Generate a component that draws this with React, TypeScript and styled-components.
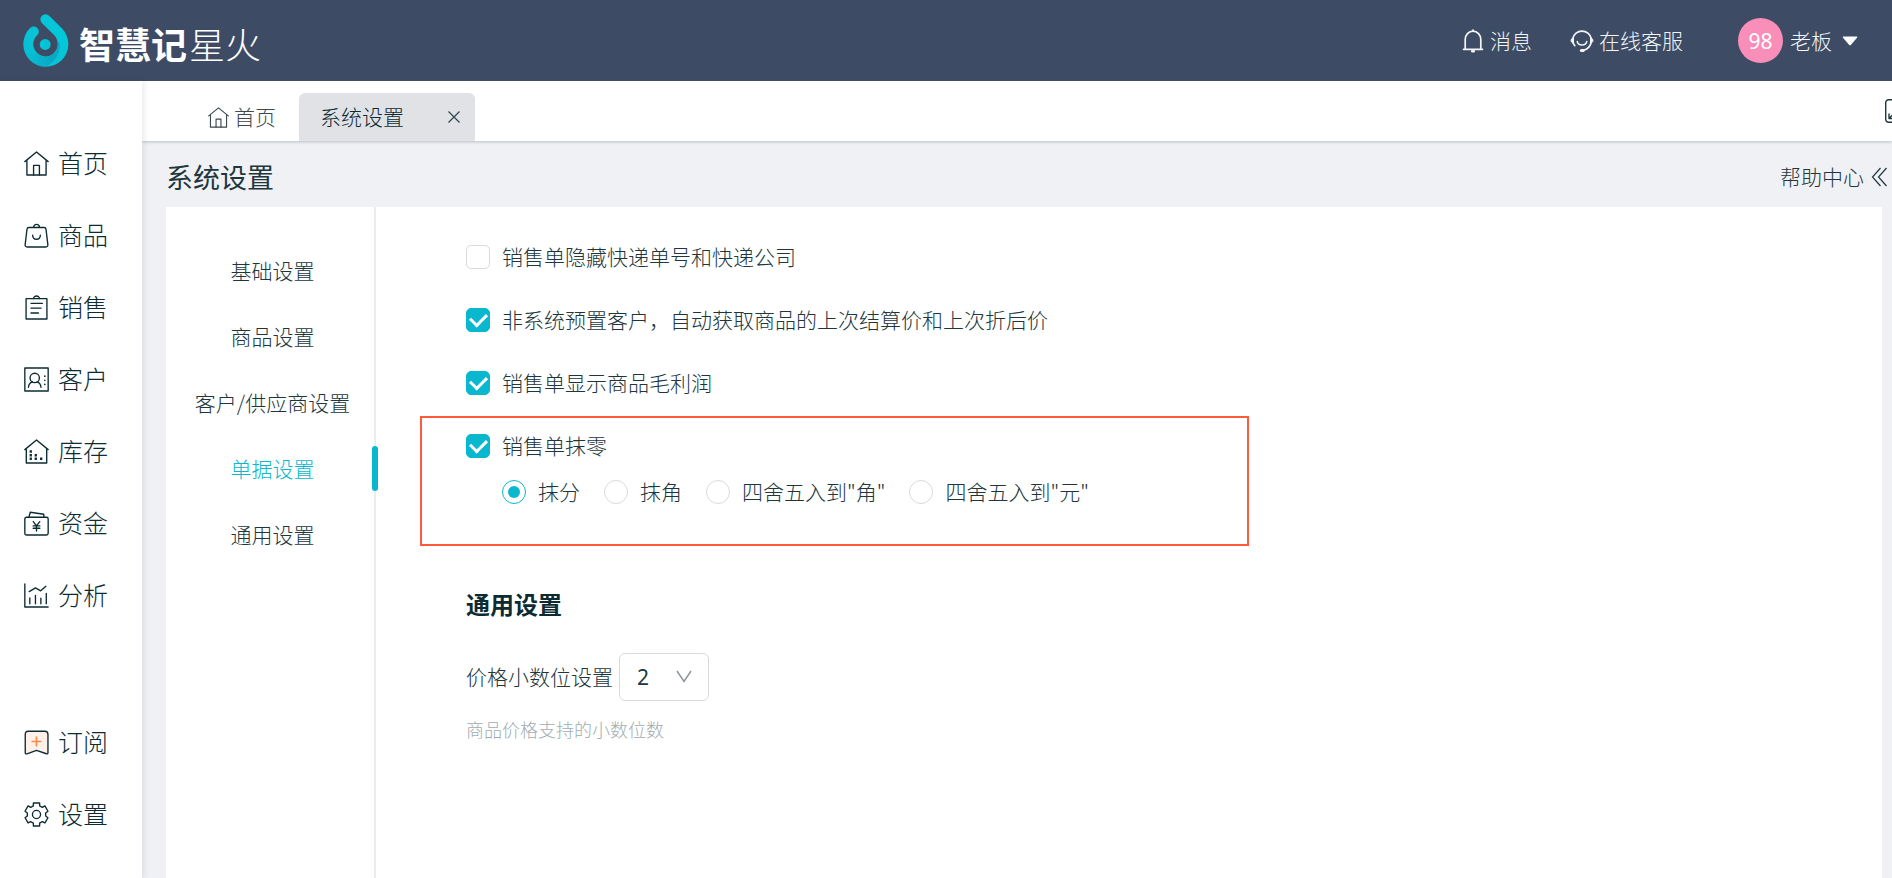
import React, { useState } from "react";
import styled, { createGlobalStyle } from "styled-components";

const ink = "#0c2b33";
const body = "#20363d";
const teal = "#09b8cf";

const GlobalStyle = createGlobalStyle`
  * { box-sizing: border-box; }
  body {
    margin: 0;
    background: #f0f1f5;
    color: ${body};
    font-family: "Noto Sans CJK SC", "Noto Sans", sans-serif;
    font-size: 21px;
    font-weight: 300;
    line-height: 32px;
  }
  button, select, input { font: inherit; color: inherit; margin: 0; }
  a { color: inherit; text-decoration: none; }
  h1, h2, p { margin: 0; }
`;

const Shell = styled.div`
  display: flex;
  flex-direction: column;
  min-height: 100vh;
`;

const Header = styled.header`
  display: flex;
  align-items: center;
  justify-content: space-between;
  height: 81px;
  padding: 0 31px 0 22px;
  background: #3d4c64;
  color: #f3f5f8;
`;

const Brand = styled.a`
  display: flex;
  align-items: center;
  gap: 10px;
  color: #fff;
  font-size: 36px;
  line-height: 48px;
`;

const BrandName = styled.span`
  font-weight: 300;
  padding-top: 4px;
  b { font-weight: 700; margin-right: 2px; }
`;

const HeaderTools = styled.div`
  display: flex;
  align-items: center;
`;

const ToolButton = styled.button<{ $space: number; $gap: number }>`
  display: flex;
  align-items: center;
  gap: ${(p) => p.$gap}px;
  margin-right: ${(p) => p.$space}px;
  padding: 0;
  border: 0;
  background: none;
`;

const Text = styled.span`
  padding-bottom: 2px;
`;

const Avatar = styled.span`
  display: grid;
  place-items: center;
  width: 45px;
  height: 45px;
  border-radius: 50%;
  background: #f98eb9;
  color: #fff;
  font-family: "Noto Sans", sans-serif;
  font-weight: 400;
`;

const Columns = styled.div`
  display: flex;
  flex: 1;
`;

const Sidebar = styled.nav`
  display: flex;
  flex-direction: column;
  flex: none;
  gap: 75px;
  width: 142px;
  padding-top: 46px;
  background: #fff;
  box-shadow: 2px 0 6px rgba(30, 50, 80, 0.1);
  z-index: 1;
`;

const NavGroup = styled.div`
  display: flex;
  flex-direction: column;
`;

const NavLink = styled.a`
  display: flex;
  align-items: center;
  gap: 9px;
  height: 72px;
  padding-left: 24px;
  color: ${ink};
  font-size: 25px;
`;

const Main = styled.main`
  display: flex;
  flex-direction: column;
  flex: 1;
  min-width: 0;
`;

const TabBar = styled.div`
  display: flex;
  align-items: flex-end;
  height: 60px;
  padding-left: 47px;
  background: #fff;
  box-shadow: 0 1px 3px rgba(60, 80, 90, 0.3);
  clip-path: inset(0 0 -6px 0);
  overflow: hidden;
`;

const Tab = styled.div<{ $active?: boolean }>`
  display: flex;
  align-items: center;
  justify-content: space-between;
  gap: 5px;
  height: 48px;
  width: ${(p) => (p.$active ? "176px" : "110px")};
  padding: ${(p) => (p.$active ? "0 14px 0 21px" : "0 23px 0 19px")};
  border-radius: 6px 6px 0 0;
  background: ${(p) => (p.$active ? "#e1e2e6" : "transparent")};
  color: ${(p) => (p.$active ? ink : "#3c494d")};
  white-space: nowrap;
`;

const IconButton = styled.button`
  display: flex;
  padding: 0;
  border: 0;
  background: none;
`;

const ExpandButton = styled(IconButton)`
  flex: none;
  align-self: center;
  margin-left: auto;
  margin-right: -17px;
`;

const PageHead = styled.div`
  display: flex;
  align-items: center;
  justify-content: space-between;
  height: 66px;
  padding: 6px 4px 0 24px;
`;

const PageTitle = styled.h1`
  font-size: 27px;
  font-weight: 400;
  line-height: 40px;
`;

const HelpLink = styled.a`
  display: flex;
  align-items: center;
  gap: 7px;
`;

const Panel = styled.section`
  display: flex;
  flex: 1;
  margin: 0 10px 0 24px;
  background: #fff;
`;

const SubMenu = styled.nav`
  display: flex;
  flex-direction: column;
  flex: none;
  width: 210px;
  padding-top: 31px;
  border-right: 2px solid #ebecef;
`;

const SubLink = styled.a<{ $active?: boolean }>`
  position: relative;
  display: flex;
  align-items: center;
  justify-content: center;
  height: 66px;
  padding-left: 5px;
  color: ${(p) => (p.$active ? teal : body)};
  &::after {
    content: "";
    display: ${(p) => (p.$active ? "block" : "none")};
    position: absolute;
    right: -4px;
    top: 10px;
    width: 6px;
    height: 45px;
    border-radius: 3px;
    background: ${teal};
  }
`;

const Content = styled.div`
  flex: 1;
  min-width: 0;
  padding: 18px 44px;
`;

const OptionRow = styled.div`
  display: flex;
  align-items: center;
  height: 63px;
  padding-left: 46px;
`;

const Choice = styled.label`
  display: flex;
  align-items: center;
  gap: 12px;
`;

const CheckInput = styled.input`
  appearance: none;
  display: grid;
  place-items: center;
  width: 24px;
  height: 24px;
  border: 1px solid #d9dade;
  border-radius: 5px;
  background: #fff;
  &:checked { background: ${teal}; border-color: ${teal}; }
  &:checked::after {
    content: "";
    width: 8px;
    height: 13px;
    margin-bottom: 3px;
    border: solid #fff;
    border-width: 0 3px 3px 0;
    transform: rotate(45deg);
  }
`;

const RadioInput = styled.input`
  appearance: none;
  display: grid;
  place-items: center;
  width: 24px;
  height: 24px;
  border: 1px solid #d9dade;
  border-radius: 50%;
  background: #fff;
  &:checked { border-color: ${teal}; }
  &:checked::after {
    content: "";
    width: 12px;
    height: 12px;
    border-radius: 50%;
    background: ${teal};
  }
`;

const Highlight = styled.div`
  max-width: 829px;
  height: 130px;
  margin-top: 2px;
  border: 2px solid #ff5a3c;
`;

const HighlightHead = styled(OptionRow)`
  height: 55px;
  padding-left: 44px;
`;

const RadioRow = styled.div`
  display: flex;
  gap: 24px;
  align-items: center;
  height: 38px;
  padding-left: 80px;
`;

const Section = styled.section`
  padding: 40px 0 0 46px;
`;

const SectionTitle = styled.h2`
  color: ${ink};
  font-size: 24px;
  font-weight: 700;
  line-height: 36px;
`;

const FieldRow = styled.div`
  display: flex;
  align-items: center;
  gap: 6px;
  margin-top: 31px;
`;

const FieldLabel = styled.label`
  padding-bottom: 2px;
`;

const SelectBox = styled.span`
  position: relative;
  display: flex;
  width: 90px;
  svg {
    position: absolute;
    right: 17px;
    top: 17px;
    pointer-events: none;
  }
`;

const Select = styled.select`
  appearance: none;
  width: 100%;
  height: 48px;
  padding: 0 17px;
  border: 1px solid #d9dade;
  border-radius: 6px;
  background: #fff;
  font-family: "Noto Sans", sans-serif;
  font-weight: 400;
`;

const Hint = styled.p`
  margin-top: 14px;
  color: #9fadb1;
  font-size: 18px;
  line-height: 28px;
`;

const Icon = ({ children, size = 25, sw = 1.3 }: { children: React.ReactNode; size?: number; sw?: number }) => (
  <svg width={size} height={size} viewBox="0 0 24 24" fill="none" stroke="currentColor" strokeWidth={sw} strokeLinecap="round" strokeLinejoin="round" aria-hidden="true">
    {children}
  </svg>
);

const home = (
  <>
    <path d="M.8 10.2 12 1l11.2 9.2M2.8 9v14h18.4V9" />
    <path d="M9.2 23v-9.2h5.6V23" />
  </>
);

const icons: Record<string, React.ReactNode> = {
  首页: home,
  商品: (
    <>
      <path d="M4.6 4.3h14.8q1.5 0 1.7 1.5l1.8 15q.2 2.2-2 2.2H3.1q-2.2 0-2-2.2l1.8-15q.2-1.5 1.7-1.5Z" />
      <path d="M9.2 4.2C9.2.4 14.8.4 14.8 4.2M8.3 11.7c.2 5.2 7.2 5.2 7.4 0" />
    </>
  ),
  销售: (
    <>
      <path d="M2 3.5h20V23H2Z" />
      <path d="M9.2 3.4c0-3.2 5.6-3.2 5.6 0M6.7 8h11M6.7 12.6h9.6M6.7 17.3h7.2" />
    </>
  ),
  客户: (
    <>
      <path d="M.8 1h22.4v22H.8Z" />
      <circle cx="10.3" cy="10.5" r="4.5" />
      <path d="M4.3 19.4c.2-2.5 1.6-4.5 3.7-5.2M16.3 19.4c-.2-2.5-1.6-4.5-3.7-5.2" />
      <path strokeWidth="1.6" d="M20 8.7v.1M20 12.7v.1M20 16.7v.1" />
    </>
  ),
  库存: (
    <>
      <path d="M.8 10.2 12 1l11.2 9.2M2.2 9.2V23h19.6V9.2" />
      <path strokeWidth="2.4" strokeLinecap="butt" d="M5.4 12h2.2M5.4 15.5h2.2M5.4 19h2.2M10.2 15.5h2.2M10.2 19h2.2M15.4 19h2.2" />
    </>
  ),
  资金: (
    <>
      <rect x=".8" y="6" width="22.4" height="17" rx="1.6" />
      <path d="M4.8 5.7 6 1.2l13 1.9v2.6M8.9 10.2l3.1 4 3.1-4M12 14.2v5M8.8 14.3h6.4M8.8 16.6h6.4" />
    </>
  ),
  分析: (
    <>
      <path d="M.8 1v22h22.4M5 8.2 11 4.7l5 2.8 5-4.3" />
      <path d="M5.6 20v-5.6M11 20v-8M16.2 20v-5.4M21.4 20V10" />
    </>
  ),
  订阅: (
    <>
      <path fill="#fff1e9" d="M4 1.2h16q3 0 3 3v17.6q0 1.4-1.5 1L12 19.6 2.8 22.9Q1.2 23.2 1.2 22V4.2q0-3 2.8-3Z" />
      <path stroke="#f58a4b" strokeWidth="1.6" d="M12 6.8v8.4M7.8 11h8.4" />
    </>
  ),
  设置: (
    <>
      <path d="M9 1h6v2.8l2.6 1.4 2.5-1.4 2.9 5.1-2.2 1.6v3l2.2 1.6-2.9 5-2.5-1.3-2.6 1.4V23H9v-2.8l-2.6-1.4-2.5 1.3-2.9-5 2.2-1.6v-3L1 8.9l2.9-5.1 2.5 1.4L9 3.8Z" />
      <circle cx="12" cy="12" r="3.9" />
    </>
  ),
};

const Logo = () => (
  <svg width="47" height="55" viewBox="66 40 140 166" aria-hidden="true">
    <defs>
      <linearGradient id="drop" x1="0.1" y1="0.9" x2="0.9" y2="0.3">
        <stop offset="0" stopColor="#08bfd3" />
        <stop offset="0.5" stopColor="#07c4d6" />
        <stop offset="1" stopColor="#02c8da" />
      </linearGradient>
      <linearGradient id="shade" x1="0" y1="0" x2="1" y2="0">
        <stop offset="0" stopColor="#0aa6c6" stopOpacity="0" />
        <stop offset="0.8" stopColor="#0aa6c6" />
        <stop offset="1" stopColor="#0aa6c6" />
      </linearGradient>
    </defs>
    <path fill="url(#drop)" d="M125 70A15 15 0 0 1 147 48L186 87A68 68 0 1 1 88 87A15 15 0 0 1 113 105A37 37 0 1 0 173 135Q173 118 161 106Z" />
    <path fill="url(#shade)" d="M75 163A68 68 0 0 0 132 203Q183 180 179 128L173 130A37 37 0 0 1 112 163Z" />
    <circle cx="135" cy="135" r="16.5" fill="#04c3d6" />
  </svg>
);

const navMain = ["首页", "商品", "销售", "客户", "库存", "资金", "分析"];
const navFoot = ["订阅", "设置"];
const subItems = ["基础设置", "商品设置", "客户/供应商设置", "单据设置", "通用设置"];
const options = [
  { label: "销售单隐藏快递单号和快递公司", on: false },
  { label: "非系统预置客户，自动获取商品的上次结算价和上次折后价", on: true },
  { label: "销售单显示商品毛利润", on: true },
];
const rounding = ["抹分", "抹角", '四舍五入到"角"', '四舍五入到"元"'];

const NavItem = ({ name }: { name: string }) => (
  <NavLink href="#">
    <Icon>{icons[name]}</Icon>
    <Text>{name}</Text>
  </NavLink>
);

export default function App() {
  const [mode, setMode] = useState(rounding[0]);
  return (
    <Shell>
      <GlobalStyle />
      <Header>
        <Brand href="#">
          <Logo />
          <BrandName>
            <b>智慧记</b>星火
          </BrandName>
        </Brand>
        <HeaderTools>
          <ToolButton $gap={5} $space={38}>
            <Icon size={24} sw={1.7}>
              <path d="M4.2 20V10.500a7.800 8.300 0 0 1 15.600 0V20M2.500 20.300h19M12 2.200V1" />
              <path strokeWidth="2.6" d="M11.3 22.200h1.400" />
            </Icon>
            <Text>消息</Text>
          </ToolButton>
          <ToolButton $gap={5} $space={55}>
            <Icon size={24} sw={1.7}>
              <path d="M2.8 9.500a9.400 9.400 0 0 1 18.400 0M21.200 13.500c-1 3.800-3.700 6.800-7.700 7.800" />
              <path fill="currentColor" strokeWidth="1" d="M3.500 8.800v5.400C.2 13.500.2 9.500 3.500 8.800ZM20.500 8.800v5.400c3.300-.7 3.300-4.700 0-5.400Z" />
              <path d="M3.200 14c.4 1 .9 1.900 1.600 2.700" />
              <path strokeWidth="3" d="M11.400 21.500h1.800" />
              <path strokeWidth="1.4" d="M7.200 12.500c1 4.600 8.600 4.600 9.600 0" />
            </Icon>
            <Text>在线客服</Text>
          </ToolButton>
          <ToolButton $gap={7} $space={0}>
            <Avatar>98</Avatar>
            <Text>老板</Text>
            <svg width="22" height="10" viewBox="0 0 22 10" aria-hidden="true">
              <path d="M4.500.5h13q1.500 0 .5 1.200L12 8.800q-1 1-2 0L4 1.700Q3 .5 4.500.5Z" fill="#fff" />
            </svg>
          </ToolButton>
        </HeaderTools>
      </Header>
      <Columns>
        <Sidebar>
          <NavGroup>{navMain.map((n) => <NavItem key={n} name={n} />)}</NavGroup>
          <NavGroup>{navFoot.map((n) => <NavItem key={n} name={n} />)}</NavGroup>
        </Sidebar>
        <Main>
          <TabBar>
            <Tab>
              <Icon size={21}>{home}</Icon>
              <Text as="a" href="#">首页</Text>
            </Tab>
            <Tab $active>
              <Text>系统设置</Text>
              <IconButton aria-label="关闭">
                <svg width="14" height="14" viewBox="0 0 14 14" stroke="#2f444b" strokeWidth="1.2" aria-hidden="true">
                  <path d="M1.500 1.500l11 11M12.500 1.500l-11 11" />
                </svg>
              </IconButton>
            </Tab>
            <ExpandButton aria-label="展开">
              <Icon size={24} sw={1.4}>
                <rect x=".7" y=".7" width="22.6" height="22.6" rx="3" />
                <path d="M4 15v4.500h4.500M4.500 19l5-5" />
              </Icon>
            </ExpandButton>
          </TabBar>
          <PageHead>
            <PageTitle>系统设置</PageTitle>
            <HelpLink href="#">
              <Text>帮助中心</Text>
              <svg width="17" height="20" viewBox="0 0 17 20" fill="none" stroke="currentColor" strokeWidth="1.2" aria-hidden="true">
                <path d="M9.500 1 1.500 10l8 9M15.500 1l-8 9 8 9" />
              </svg>
            </HelpLink>
          </PageHead>
          <Panel>
            <SubMenu>
              {subItems.map((s) => (
                <SubLink key={s} href="#" $active={s === "单据设置"}>
                  <Text>{s}</Text>
                </SubLink>
              ))}
            </SubMenu>
            <Content>
              {options.map((o) => (
                <OptionRow key={o.label}>
                  <Choice>
                    <CheckInput type="checkbox" defaultChecked={o.on} />
                    <Text>{o.label}</Text>
                  </Choice>
                </OptionRow>
              ))}
              <Highlight>
                <HighlightHead>
                  <Choice>
                    <CheckInput type="checkbox" defaultChecked />
                    <Text>销售单抹零</Text>
                  </Choice>
                </HighlightHead>
                <RadioRow>
                  {rounding.map((r) => (
                    <Choice key={r}>
                      <RadioInput type="radio" name="rounding" checked={mode === r} onChange={() => setMode(r)} />
                      <Text>{r}</Text>
                    </Choice>
                  ))}
                </RadioRow>
              </Highlight>
              <Section>
                <SectionTitle>通用设置</SectionTitle>
                <FieldRow>
                  <FieldLabel htmlFor="decimals">价格小数位设置</FieldLabel>
                  <SelectBox>
                    <Select id="decimals" defaultValue="2">
                      {[0, 1, 2, 3, 4].map((n) => <option key={n}>{n}</option>)}
                    </Select>
                    <svg width="16" height="13" viewBox="0 0 16 13" fill="none" stroke="#8a9699" strokeWidth="1.5" aria-hidden="true">
                      <path d="M1 1l7 10.500L15 1" />
                    </svg>
                  </SelectBox>
                </FieldRow>
                <Hint>商品价格支持的小数位数</Hint>
              </Section>
            </Content>
          </Panel>
        </Main>
      </Columns>
    </Shell>
  );
}
